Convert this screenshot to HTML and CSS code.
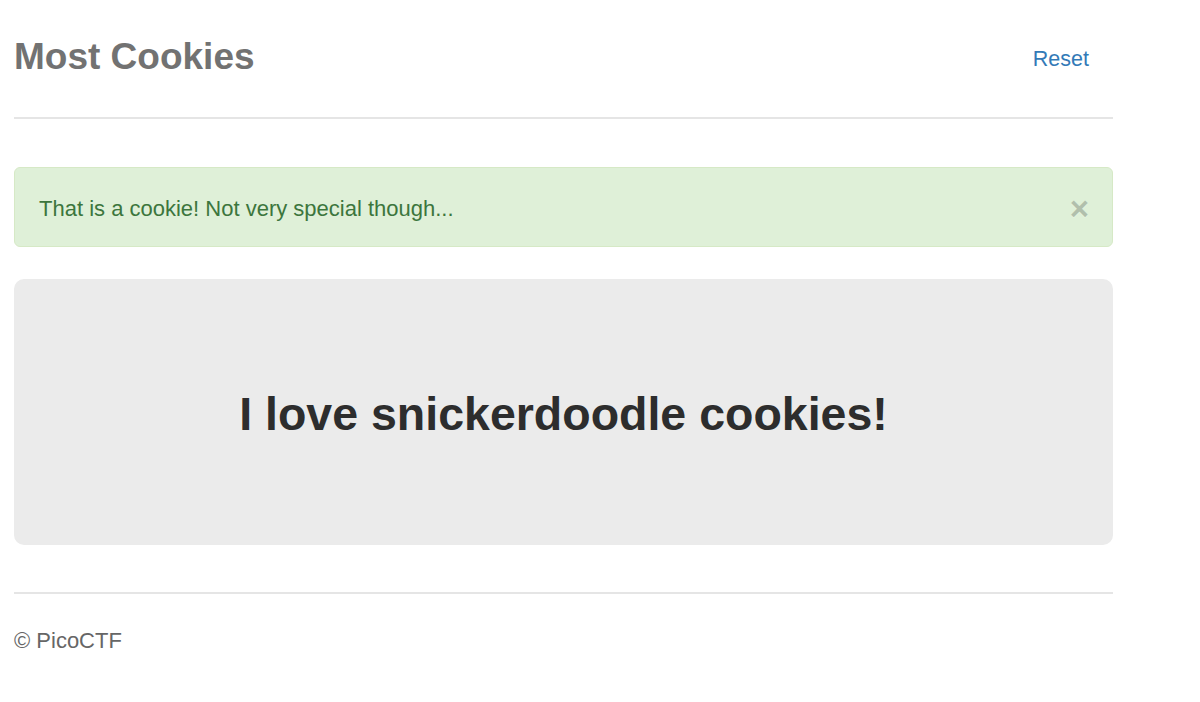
FILE: index.html
```html
<!DOCTYPE html>
<html lang="en">
<head>
<meta charset="utf-8">
<title>Most Cookies</title>
<link rel="stylesheet" href="styles.css">
</head>
<body>
<div class="container">
  <header class="header">
    <h3 class="title">Most Cookies</h3>
    <nav class="nav">
      <a class="nav-link" href="#">Reset</a>
    </nav>
  </header>

  <div class="alert">
    <span class="alert-text">That is a cookie! Not very special though...</span>
    <button class="close" type="button" aria-label="Close">×</button>
  </div>

  <div class="jumbotron">
    <h1 class="jumbo-title">I love snickerdoodle cookies!</h1>
  </div>

  <footer class="footer">
    <p class="footer-text">© PicoCTF</p>
  </footer>
</div>
</body>
</html>
```
FILE: styles.css
```css
* {
  box-sizing: border-box;
}

html, body {
  margin: 0;
  padding: 0;
  background: #ffffff;
}

body {
  font-family: "Liberation Sans", Arial, Helvetica, sans-serif;
  font-size: 22px;
  line-height: 30px;
  color: #333333;
}

.container {
  width: 1113px;
  padding-left: 14px;
}

.header {
  display: flex;
  align-items: center;
  justify-content: space-between;
  padding-top: 26px;
  padding-bottom: 29px;
  border-bottom: 2px solid #e5e5e5;
}

.title {
  margin: 0;
  font-size: 37px;
  line-height: 62px;
  font-weight: bold;
  color: #727272;
}

.nav {
  display: flex;
}

.nav-link {
  display: block;
  padding: 4px 24px 0 24px;
  font-size: 21.5px;
  line-height: 58px;
  color: #337ab7;
  text-decoration: none;
}

.alert {
  display: flex;
  align-items: center;
  justify-content: space-between;
  margin-top: 48px;
  padding: 26px 23px 22px 24px;
  background: #dff0d8;
  border: 1px solid #d6e9c6;
  border-radius: 6px;
  color: #3c763d;
}

.alert-text {
  font-size: 22px;
  line-height: 30px;
}

.close {
  padding: 0;
  margin: 0;
  border: 0;
  background: transparent;
  font-family: "Liberation Sans", Arial, Helvetica, sans-serif;
  font-size: 33px;
  font-weight: bold;
  line-height: 30px;
  color: #000000;
  opacity: 0.2;
  text-shadow: 0 1px 0 #ffffff;
  cursor: pointer;
}

.jumbotron {
  margin-top: 32px;
  padding: 109px 0 105px 0;
  background: #ebebeb;
  border-radius: 10px;
  text-align: center;
}

.jumbo-title {
  margin: 0;
  font-size: 46.5px;
  line-height: 52px;
  font-weight: bold;
  color: #2d2d2d;
}

.footer {
  margin-top: 47px;
  padding-top: 32px;
  border-top: 2px solid #e5e5e5;
}

.footer-text {
  margin: 0;
  font-size: 22px;
  line-height: 30px;
  color: #666666;
}
```
